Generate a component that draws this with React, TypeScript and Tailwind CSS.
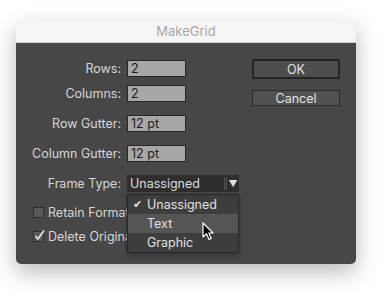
import React from 'react'

const FONT = { fontFamily: 'Inter, "Liberation Sans", sans-serif' }

const FIELDS = [
  { label: 'Rows:', value: '2', mt: 'mt-0' },
  { label: 'Columns:', value: '2', mt: 'mt-[8px]' },
  { label: 'Row Gutter:', value: '12 pt', mt: 'mt-[13px]' },
  { label: 'Column Gutter:', value: '12 pt', mt: 'mt-[13px]' },
]

function Cursor() {
  return (
    <svg width="12" height="19" viewBox="0 0 12 19" className="absolute left-[202px] top-[222px]">
      <path d="M1 1 L1 15 L4.5 11.8 L7 17.5 L9.2 16.5 L6.8 11 L11 11 Z" fill="#000" stroke="#fff" strokeWidth="1.2" strokeLinejoin="round" />
    </svg>
  )
}

export default function App() {
  return (
    <div className="relative w-[383px] h-[294px] bg-white overflow-hidden" style={FONT}>
      <div className="absolute left-[16px] top-[21px] w-[340px] h-[243px] rounded-[5px] overflow-hidden shadow-[0_8px_22px_rgba(0,0,0,0.28)] flex flex-col">
        <div className="h-[22px] bg-[#f5f5f5] border-b border-[#d0d0d0] flex items-center justify-center text-[13px] leading-[17px] text-[#a9a9a9]">
          MakeGrid
        </div>
        <div className="flex-1 bg-[#474747] flex text-[12.5px] leading-[17px]">
          <div className="flex-1 pt-[17px]">
            {FIELDS.map(f => (
              <div key={f.label} className={`flex items-center h-[17px] ${f.mt}`}>
                <div className="w-[105px] text-right text-[#d6d6d6]">{f.label}</div>
                <div className="ml-[6px] w-[59px] h-[17px] bg-[#a7a7a7] border border-[#262626] leading-[15px] text-[#1c1c1c] pl-[3px]">
                  {f.value}
                </div>
              </div>
            ))}
            <div className="flex items-center h-[17px] mt-[13px]">
              <div className="w-[105px] text-right text-[#d6d6d6]">Frame Type:</div>
              <div className="ml-[6px] w-[112px] h-[17px] bg-[#2e2e2e] flex items-center text-[#dcdcdc]">
                <span className="flex-1 pl-[3px]">Unassigned</span>
                <span className="w-px h-[13px] bg-[#555] mr-px" />
                <span className="w-px h-[13px] bg-[#555]" />
                <span className="w-[12px] text-center text-[9px] text-[#e0e0e0]">▼</span>
              </div>
            </div>
            <div className="flex items-center h-[17px] mt-[12px] pl-[17px] text-[#d6d6d6]">
              <span className="w-[11px] h-[11px] bg-[#5a5a5a] border border-[#2f2f2f]" />
              <span className="ml-[4px]">Retain Formatting</span>
            </div>
            <div className="flex items-center h-[17px] mt-[7px] pl-[17px] text-[#d6d6d6]">
              <span className="relative w-[11px] h-[11px] bg-[#5a5a5a] border border-[#2f2f2f]">
                <svg width="13" height="13" viewBox="0 0 13 13" className="absolute left-[-1px] top-[-3px]">
                  <path d="M2.5 7 L5 10 L11 1.5" fill="none" stroke="#e8e8e8" strokeWidth="1.6" />
                </svg>
              </span>
              <span className="ml-[4px]">Delete Original</span>
            </div>
          </div>
          <div className="w-[88px] mr-[16px] pt-[16px] flex flex-col">
            <div className="h-[20px] border-2 border-[#232323] rounded-[2px] bg-[#4d4d4d] flex items-center justify-center text-[#e2e2e2]">
              OK
            </div>
            <div className="mt-[11px] h-[16px] border border-[#2a2a2a] bg-[#525252] flex items-center justify-center text-[#e2e2e2]">
              Cancel
            </div>
          </div>
        </div>
      </div>
      <div className="absolute left-[127px] top-[194px] w-[112px] h-[59px] bg-[#3d3d3d] border border-[#262626] shadow-[0_2px_5px_rgba(0,0,0,0.35)] text-[12.5px] leading-[17px] text-[#e0e0e0] flex flex-col">
        <div className="flex-1 flex items-center">
          <span className="w-[19px] text-center text-[11px]">✔</span>
          <span>Unassigned</span>
        </div>
        <div className="flex-1 flex items-center bg-[#555555]">
          <span className="w-[19px]" />
          <span>Text</span>
        </div>
        <div className="flex-1 flex items-center">
          <span className="w-[19px]" />
          <span>Graphic</span>
        </div>
      </div>
      <Cursor />
    </div>
  )
}
